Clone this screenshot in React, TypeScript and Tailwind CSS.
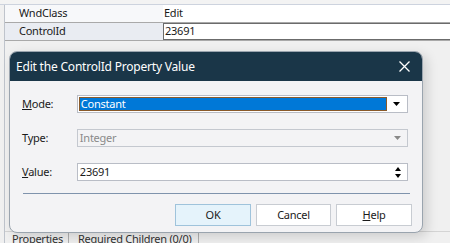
import React from "react";

const font = { fontFamily: '"Noto Sans", "Open Sans", "Liberation Sans", sans-serif' };

function Caret({ color = "#000" }: { color?: string }) {
  return (
    <svg width="7" height="4" viewBox="0 0 7 4">
      <path d="M0 0 L7 0 L3.5 4 Z" fill={color} />
    </svg>
  );
}

export default function App() {
  return (
    <div
      className="relative w-[450px] h-[243px] overflow-hidden bg-[#f0f0f0] text-[11px] tracking-[-0.25px] text-[#1a1a1a] flex flex-col"
      style={font}
    >
      <div className="h-[5px] bg-[#f3f3f3] border-b border-[#cdd3de] shrink-0" />
      <div className="ml-[4px] border-l border-[#bfc4cc] flex flex-col flex-1">
        <div className="flex h-[18px] border-b border-[#a9a9a9]">
          <div className="w-[158px] bg-[#f7f8fa] pl-[14px] flex items-center">WndClass</div>
          <div className="flex-1 bg-white pl-[1px] flex items-center">Edit</div>
        </div>
        <div className="flex h-[18px] border-b border-[#a9a9a9]">
          <div className="w-[158px] bg-[#e9ecf2] pl-[14px] flex items-center">ControlId</div>
          <div className="flex-1 bg-white border border-[#6b6b6b] border-r-0 pl-[1px] flex items-center">23691</div>
        </div>
        <div className="flex-1" />
        <div className="h-[12px] flex items-start border-t border-[#d4d4d4] leading-[13px] text-[#333] whitespace-nowrap">
          <div className="w-[64px] pl-[7px] border-r border-[#b0b0b0] h-full">
            <span className="underline">P</span>roperties
          </div>
          <div className="w-[130px] pl-[9px] border-r border-[#b0b0b0] h-full">Required Children (0/0)</div>
        </div>
      </div>

      <div className="absolute left-[9px] top-[51px] w-[414px] h-[182px] rounded-[8px] bg-[#f3f3f5] border border-[#9aa4ae] shadow-[4px_4px_12px_rgba(0,0,0,0.15)] overflow-hidden flex flex-col">
        <div className="h-[29px] bg-[#1a3648] pl-[6px] pr-[12px] flex items-center justify-between text-white text-[12px] tracking-[-0.2px] shrink-0">
          <span>Edit the ControlId Property Value</span>
          <svg width="11" height="11" viewBox="0 0 11 11">
            <path d="M0.5 0.5 L10.5 10.5 M10.5 0.5 L0.5 10.5" stroke="#fff" strokeWidth="1.3" />
          </svg>
        </div>
        <div className="flex flex-col pl-[12px] pr-[14px] pt-[14px]">
          <div className="flex items-center h-[18px]">
            <div className="w-[55px]"><span className="underline">M</span>ode:</div>
            <div className="w-[332px] h-[18px] bg-white border border-[#b9bdc6] flex items-stretch p-[1px]">
              <div className="flex-1 bg-[#0078d7] border border-[#8a5a2a] text-white flex items-center pl-[1px]">Constant</div>
              <div className="w-[19px] flex items-center justify-center"><Caret /></div>
            </div>
          </div>
          <div className="flex items-center h-[18px] mt-[16px]">
            <div className="w-[55px]">Type:</div>
            <div className="w-[332px] h-[18px] bg-[#f3f3f5] border border-[#c4c8cf] flex items-center text-[#8a8a8a] pl-[2px]">
              <span className="flex-1">Integer</span>
              <div className="w-[19px] flex items-center justify-center"><Caret color="#888" /></div>
            </div>
          </div>
          <div className="flex items-center h-[18px] mt-[16px]">
            <div className="w-[55px]"><span className="underline">V</span>alue:</div>
            <div className="w-[332px] h-[18px] bg-white border border-[#b9bdc6] flex items-center pl-[2px]">
              <span className="flex-1">23691</span>
              <div className="w-[19px] flex flex-col items-center justify-center gap-[3px]">
                <svg width="6" height="4" viewBox="0 0 6 4"><path d="M0 4 L6 4 L3 0 Z" fill="#000" /></svg>
                <svg width="6" height="4" viewBox="0 0 6 4"><path d="M0 0 L6 0 L3 4 Z" fill="#000" /></svg>
              </div>
            </div>
          </div>
          <div className="h-[1px] bg-[#7f93ac] mt-[12px] ml-[1px] mr-[-2px]" />
          <div className="flex justify-end gap-[5px] mt-[10px] mr-[-4px]">
            <div className="w-[76px] h-[22px] bg-[#e5f3fb] border border-[#9fc3db] flex items-center justify-center">OK</div>
            <div className="w-[75px] h-[22px] bg-white border border-[#c8ccd2] flex items-center justify-center">Cancel</div>
            <div className="w-[76px] h-[22px] bg-white border border-[#c8ccd2] flex items-center justify-center">
              <span><span className="underline">H</span>elp</span>
            </div>
          </div>
        </div>
      </div>
    </div>
  );
}
